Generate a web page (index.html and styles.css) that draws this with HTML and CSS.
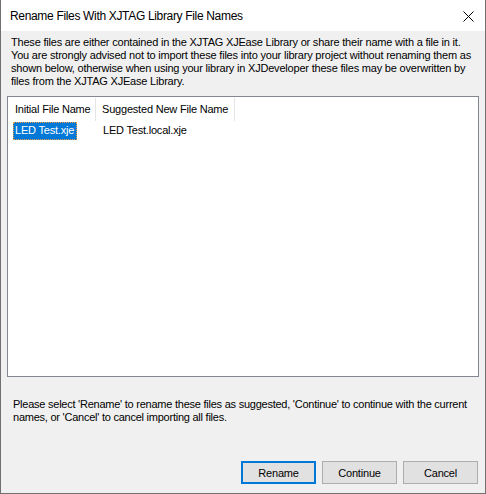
FILE: index.html
```html
<!DOCTYPE html>
<html>
<head>
<meta charset="utf-8">
<link rel="stylesheet" href="styles.css">
</head>
<body>
<div class="window">
  <div class="titlebar">
    <span class="title">Rename Files With XJTAG Library File Names</span>
    <svg class="close" width="11" height="11" viewBox="0 0 11 11"><path d="M0.5 0.5 L10.5 10.5 M10.5 0.5 L0.5 10.5" stroke="#000" stroke-width="1" fill="none"/></svg>
  </div>
  <div class="content">
    <p class="desc">These files are either contained in the XJTAG XJEase Library or share their name with a file in it.<br>You are strongly advised not to import these files into your library project without renaming them as<br>shown below, otherwise when using your library in XJDeveloper these files may be overwritten by<br>files from the XJTAG XJEase Library.</p>
    <div class="listview">
      <div class="lv-header">
        <div class="hcell col1">Initial File Name</div>
        <div class="hcell col2">Suggested New File Name</div>
      </div>
      <div class="lv-row">
        <div class="cell col1"><span class="selected">LED Test.xje</span></div>
        <div class="cell col2">LED Test.local.xje</div>
      </div>
    </div>
    <p class="note">Please select 'Rename' to rename these files as suggested, 'Continue' to continue with the current<br>names, or 'Cancel' to cancel importing all files.</p>
    <div class="buttons">
      <button class="btn default">Rename</button>
      <button class="btn">Continue</button>
      <button class="btn">Cancel</button>
    </div>
  </div>
</div>
</body>
</html>
```
FILE: styles.css
```css
* { box-sizing: border-box; }
html, body { margin: 0; padding: 0; background: #f0f0f0; }
body { font-family: "Liberation Sans", Arial, sans-serif; font-size: 11px; color: #000; letter-spacing: -0.2px; }

.window {
  width: 486px;
  height: 494px;
  display: flex;
  flex-direction: column;
  border: 1px solid #707070;
  border-top: none;
  background: #f0f0f0;
}

.titlebar {
  height: 31px;
  background: #fff;
  display: flex;
  align-items: center;
  justify-content: space-between;
  padding: 0 11px 0 9px;
  flex: none;
}
.title { font-size: 12px; line-height: 16px; padding-top: 1px; letter-spacing: -0.33px; }
.close { display: block; margin-top: 2px; }

.content {
  flex: 1;
  display: flex;
  flex-direction: column;
  padding: 5px 6px 9px 6px;
  min-height: 0;
}

.desc {
  margin: 0 0 8px 4px;
  line-height: 13px;
  white-space: nowrap;
}

.listview {
  flex: 1;
  background: #fff;
  border: 1px solid #828790;
}
.lv-header { display: flex; height: 25px; align-items: stretch; }
.hcell {
  line-height: 13px;
  display: flex;
  align-items: center;
  border-right: 1px solid #e5e5e5;
  margin: 1px 0 1px 0;
  white-space: nowrap;
}
.hcell.col1 { width: 88px; padding-left: 7px; }
.hcell.col2 { width: 139px; padding-left: 6px; }

.lv-row { display: flex; height: 17px; align-items: center; }
.cell { line-height: 13px; white-space: nowrap; }
.cell.col1 { width: 88px; padding-left: 5px; }
.cell.col2 { padding-left: 7px; }
.selected {
  display: inline-block;
  background: #0078d7;
  color: #fff;
  border: 1px dotted #f0a040;
  padding: 1px 2px 2px 1px;
  line-height: 13px;
}

.note {
  margin: 21px 0 0 6px;
  line-height: 13px;
  white-space: nowrap;
  letter-spacing: -0.24px;
}

.buttons {
  margin-top: 37px;
  display: flex;
  justify-content: flex-end;
  gap: 6px;
  padding-right: 1px;
}
.btn {
  width: 75px;
  height: 23px;
  background: #e1e1e1;
  border: 1px solid #adadad;
  font-family: "Liberation Sans", Arial, sans-serif;
  font-size: 11px;
  letter-spacing: -0.2px;
  color: #000;
  padding: 0;
  border-radius: 0;
}
.btn.default { border: 2px solid #0078d7; }
```
